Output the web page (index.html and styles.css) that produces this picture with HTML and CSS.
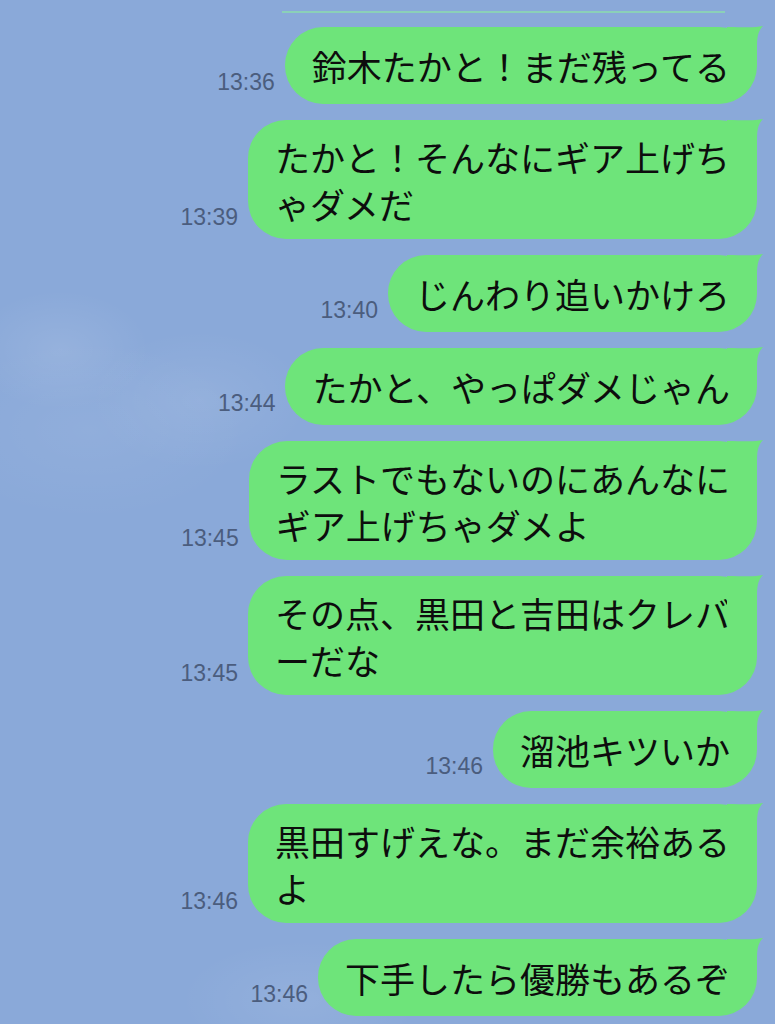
FILE: index.html
```html
<!DOCTYPE html>
<html lang="ja">
<head>
    <meta charset="UTF-8">
    <meta name="viewport" content="width=device-width, initial-scale=1.0">
    <title>トーク</title>
    <link rel="stylesheet" href="styles.css">
</head>
<body>
    <div class="chat">
        <div class="prev-edge"></div>

        <div class="row">
            <span class="time">13:36</span>
            <div class="bubble"><p class="text">鈴木たかと！まだ残ってる</p><svg class="tail" viewBox="0 0 38 40"><path d="M0 2 C15 2 28 3 36 1 C32 5 30 10 30 20 L30 40 L0 40 Z"/></svg></div>
        </div>
        <div class="row">
            <span class="time">13:39</span>
            <div class="bubble"><p class="text">たかと！そんなにギア上げち<br>ゃダメだ</p><svg class="tail" viewBox="0 0 38 40"><path d="M0 2 C15 2 28 3 36 1 C32 5 30 10 30 20 L30 40 L0 40 Z"/></svg></div>
        </div>
        <div class="row">
            <span class="time">13:40</span>
            <div class="bubble"><p class="text">じんわり追いかけろ</p><svg class="tail" viewBox="0 0 38 40"><path d="M0 2 C15 2 28 3 36 1 C32 5 30 10 30 20 L30 40 L0 40 Z"/></svg></div>
        </div>
        <div class="row">
            <span class="time">13:44</span>
            <div class="bubble"><p class="text">たかと、やっぱダメじゃん</p><svg class="tail" viewBox="0 0 38 40"><path d="M0 2 C15 2 28 3 36 1 C32 5 30 10 30 20 L30 40 L0 40 Z"/></svg></div>
        </div>
        <div class="row">
            <span class="time">13:45</span>
            <div class="bubble"><p class="text">ラストでもないのにあんなに<br>ギア上げちゃダメよ</p><svg class="tail" viewBox="0 0 38 40"><path d="M0 2 C15 2 28 3 36 1 C32 5 30 10 30 20 L30 40 L0 40 Z"/></svg></div>
        </div>
        <div class="row">
            <span class="time">13:45</span>
            <div class="bubble"><p class="text">その点、黒田と吉田はクレバ<br>ーだな</p><svg class="tail" viewBox="0 0 38 40"><path d="M0 2 C15 2 28 3 36 1 C32 5 30 10 30 20 L30 40 L0 40 Z"/></svg></div>
        </div>
        <div class="row">
            <span class="time">13:46</span>
            <div class="bubble"><p class="text">溜池キツいか</p><svg class="tail" viewBox="0 0 38 40"><path d="M0 2 C15 2 28 3 36 1 C32 5 30 10 30 20 L30 40 L0 40 Z"/></svg></div>
        </div>
        <div class="row">
            <span class="time">13:46</span>
            <div class="bubble"><p class="text">黒田すげえな。まだ余裕ある<br>よ</p><svg class="tail" viewBox="0 0 38 40"><path d="M0 2 C15 2 28 3 36 1 C32 5 30 10 30 20 L30 40 L0 40 Z"/></svg></div>
        </div>
        <div class="row">
            <span class="time">13:46</span>
            <div class="bubble"><p class="text">下手したら優勝もあるぞ</p><svg class="tail" viewBox="0 0 38 40"><path d="M0 2 C15 2 28 3 36 1 C32 5 30 10 30 20 L30 40 L0 40 Z"/></svg></div>
        </div>
    </div>
</body>
</html>
```

FILE: styles.css
```css
body {
    margin: 0;
    height: 1024px;
    overflow: hidden;
    font-family: "Noto Sans CJK JP", "Noto Sans", sans-serif;
    background-color: #8aa9d9;
    background-image:
        radial-gradient(ellipse 90px 60px at 60px 350px, rgba(255, 255, 255, 0.10), transparent),
        radial-gradient(ellipse 110px 70px at 200px 400px, rgba(255, 255, 255, 0.08), transparent),
        radial-gradient(ellipse 160px 90px at 90px 430px, rgba(255, 255, 255, 0.06), transparent),
        radial-gradient(ellipse 120px 60px at 300px 1000px, rgba(255, 255, 255, 0.08), transparent);
}
.chat {
    display: flex;
    flex-direction: column;
    padding: 11px 18px 0 0;
}
.prev-edge {
    align-self: flex-end;
    width: 443px;
    height: 2px;
    margin-right: 32px;
    margin-bottom: 14px;
    background: rgba(140, 225, 170, 0.7);
}
.row {
    display: flex;
    justify-content: flex-end;
    align-items: flex-end;
    gap: 10px;
    margin-bottom: 16px;
}
.time {
    font-family: "Liberation Sans", Arial, sans-serif;
    font-size: 23px;
    line-height: 1;
    color: #4b5d7e;
    margin-bottom: 10px;
}
.bubble {
    position: relative;
    display: flex;
    align-items: center;
    box-sizing: border-box;
    min-height: 77px;
    background: #6ee47a;
    color: #0d0d0d;
    padding: 12.5px 27px 12.5px 27px;
    border-radius: 38px;
}
.text {
    margin: 0;
    font-size: 35px;
    line-height: 47px;
    white-space: nowrap;
}
.tail {
    position: absolute;
    top: -2px;
    right: -8px;
    width: 38px;
    height: 40px;
    fill: #6ee47a;
}
```
